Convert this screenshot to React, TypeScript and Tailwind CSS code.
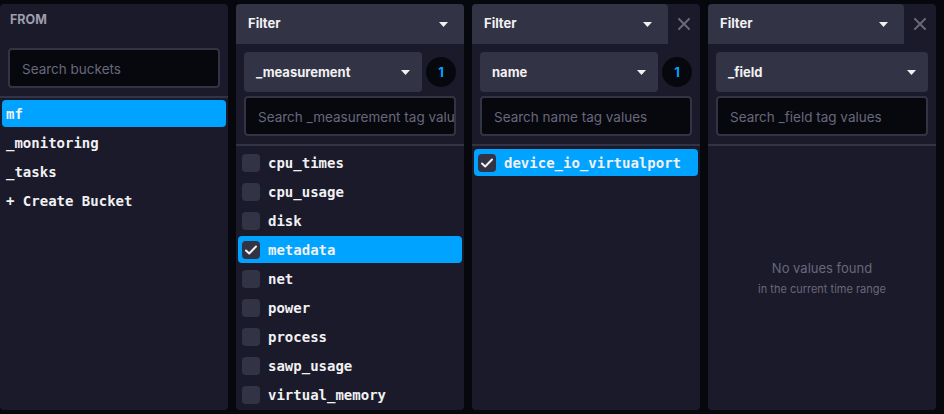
import React from "react";

const ui = { fontFamily: "Inter, 'Noto Sans', sans-serif" };
const mono = { fontFamily: "'DejaVu Sans Mono', 'Liberation Mono', monospace" };

function Caret() {
  return (
    <svg width="9" height="5" viewBox="0 0 9 5" className="shrink-0">
      <path d="M0 0h9L4.5 5z" fill="#F1F1F3" />
    </svg>
  );
}

function CloseIcon() {
  return (
    <svg width="12" height="12" viewBox="0 0 12 12">
      <path d="M1 1l10 10M11 1L1 11" stroke="#68687B" strokeWidth="2" strokeLinecap="round" />
    </svg>
  );
}

function Check() {
  return (
    <svg width="12" height="10" viewBox="0 0 12 10">
      <path d="M1 5.5l3.2 3L11 1.5" stroke="#F1F1F3" strokeWidth="2" fill="none" strokeLinecap="round" strokeLinejoin="round" />
    </svg>
  );
}

function SearchBox({ placeholder }: { placeholder: string }) {
  return (
    <div className="h-10 bg-[#07070E] border-2 border-[#333346] rounded-sm flex items-center pl-3 pt-[2px] overflow-hidden">
      <span className="text-[13.5px] text-[#68687B] whitespace-nowrap">{placeholder}</span>
    </div>
  );
}

type Item = { label: string; checked?: boolean };

function TagPanel({
  tag,
  count,
  closable,
  items,
}: {
  tag: string;
  count?: number;
  closable?: boolean;
  items: Item[];
}) {
  return (
    <div className="w-[228px] h-[406px] bg-[#1A1A2A] rounded flex flex-col" style={ui}>
      <div className="flex h-10">
        <div className="flex-1 bg-[#333346] rounded-t flex items-center justify-between pl-3 pr-4">
          <span className="text-[13px] font-bold text-[#F1F1F3]">Filter</span>
          <Caret />
        </div>
        {closable && (
          <div className="w-8 flex items-center justify-center">
            <CloseIcon />
          </div>
        )}
      </div>
      <div className="px-2 pt-2 flex flex-col gap-1">
        <div className="flex items-center gap-1">
          <div className="flex-1 h-10 bg-[#333346] rounded-sm flex items-center justify-between px-3">
            <span className="text-[13px] font-bold text-[#F1F1F3] pt-[2px]">{tag}</span>
            <Caret />
          </div>
          {count !== undefined && (
            <div className="w-[30px] h-[30px] rounded-full bg-[#07070E] flex items-center justify-center text-[13px] font-bold text-[#00A3FF] pt-[1px]">
              {count}
            </div>
          )}
        </div>
        <SearchBox placeholder={`Search ${tag} tag values`} />
      </div>
      <div className="mt-2 h-[2px] bg-[#333346]" />
      {items.length > 0 ? (
        <div className="px-[2px] pt-[3px] flex flex-col gap-[2px]">
          {items.map((it) => (
            <div
              key={it.label}
              className={`h-[27px] rounded-sm flex items-center gap-2 px-1 ${it.checked ? "bg-[#00A3FF]" : ""}`}
            >
              <div className="w-[18px] h-[18px] rounded-sm bg-[#333346] flex items-center justify-center">
                {it.checked && <Check />}
              </div>
              <span className="text-[14px] font-bold text-[#F1F1F3] pt-[1px]" style={mono}>
                {it.label}
              </span>
            </div>
          ))}
        </div>
      ) : (
        <div className="flex-1 flex flex-col items-center justify-center gap-0.5">
          <span className="text-[13px] text-[#68687B]">No values found</span>
          <span className="text-[11px] text-[#68687B]">in the current time range</span>
        </div>
      )}
    </div>
  );
}

export default function App() {
  const buckets = [
    { label: "mf", selected: true },
    { label: "_monitoring" },
    { label: "_tasks" },
    { label: "+ Create Bucket" },
  ];

  const measurements: Item[] = [
    { label: "cpu_times" },
    { label: "cpu_usage" },
    { label: "disk" },
    { label: "metadata", checked: true },
    { label: "net" },
    { label: "power" },
    { label: "process" },
    { label: "sawp_usage" },
    { label: "virtual_memory" },
  ];

  return (
    <div className="w-[944px] h-[414px] bg-[#07070E] flex gap-2 pt-1 overflow-hidden" style={ui}>
      {/* FROM */}
      <div className="w-[228px] h-[406px] bg-[#1A1A2A] rounded flex flex-col">
        <div className="h-10 flex items-center px-[10px] pb-2">
          <span className="text-[12.5px] font-bold text-[#9E9EAE]">FROM</span>
        </div>
        <div className="px-2 pt-1">
          <SearchBox placeholder="Search buckets" />
        </div>
        <div className="mt-2 h-[2px] bg-[#333346]" />
        <div className="p-[2px] flex flex-col gap-[2px]">
          {buckets.map((b) => (
            <div
              key={b.label}
              className={`h-[27px] rounded-sm flex items-center px-1 ${b.selected ? "bg-[#00A3FF]" : ""}`}
            >
              <span className="text-[14px] font-bold text-[#F1F1F3] whitespace-pre pt-[1px]" style={mono}>
                {b.label}
              </span>
            </div>
          ))}
        </div>
      </div>

      <TagPanel tag="_measurement" count={1} items={measurements} />
      <TagPanel tag="name" count={1} closable items={[{ label: "device_io_virtualport", checked: true }]} />
      <TagPanel tag="_field" closable items={[]} />
    </div>
  );
}
